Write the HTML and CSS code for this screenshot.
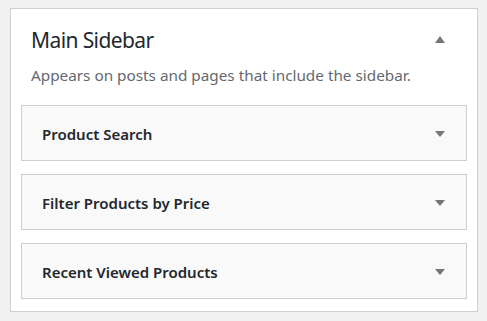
FILE: index.html
```html
<!DOCTYPE html>
<html>
<head>
<meta charset="utf-8">
<link rel="stylesheet" href="styles.css">
</head>
<body>
<div class="sidebar">
  <div class="sidebar-head">
    <h2 class="sidebar-title">Main Sidebar</h2>
    <span class="arrow arrow-up"></span>
  </div>
  <p class="sidebar-desc">Appears on posts and pages that include the sidebar.</p>
  <div class="widgets">
    <div class="widget"><span class="widget-title">Product Search</span><span class="arrow arrow-down"></span></div>
    <div class="widget"><span class="widget-title">Filter Products by Price</span><span class="arrow arrow-down"></span></div>
    <div class="widget"><span class="widget-title">Recent Viewed Products</span><span class="arrow arrow-down"></span></div>
  </div>
</div>
</body>
</html>
```
FILE: styles.css
```css
html, body {
  margin: 0;
  padding: 0;
}
body {
  background: #f1f1f1;
  padding: 8px 10px;
  font-family: "Noto Sans", "Open Sans", sans-serif;
}
.sidebar {
  width: 446px;
  background: #fff;
  border: 1px solid #ccd0d4;
  padding: 0 10px 12px 10px;
}
.sidebar-head {
  display: flex;
  align-items: flex-start;
  justify-content: space-between;
  padding: 18px 22px 0 10px;
}
.sidebar-title {
  margin: 0;
  font-size: 21px;
  line-height: 27px;
  letter-spacing: -0.6px;
  font-weight: 400;
  color: #23282d;
}
.sidebar-desc {
  margin: 11px 0 20px;
  padding: 0 10px;
  font-size: 15.3px;
  line-height: 20px;
  color: #646970;
}
.widgets {
  display: flex;
  flex-direction: column;
  gap: 13px;
}
.widget {
  box-sizing: border-box;
  display: flex;
  align-items: center;
  justify-content: space-between;
  height: 56px;
  background: #f9f9f9;
  border: 1px solid #ccd0d4;
  padding: 1px 21px 0 20px;
}
.widget-title {
  font-size: 15px;
  font-weight: 600;
  color: #23282d;
}
.arrow {
  width: 0;
  height: 0;
  border-left: 5px solid transparent;
  border-right: 5px solid transparent;
}
.arrow-down {
  border-top: 6px solid #72777c;
  margin-top: 1px;
}
.arrow-up {
  border-bottom: 7px solid #72777c;
  margin-top: 9px;
}
```
